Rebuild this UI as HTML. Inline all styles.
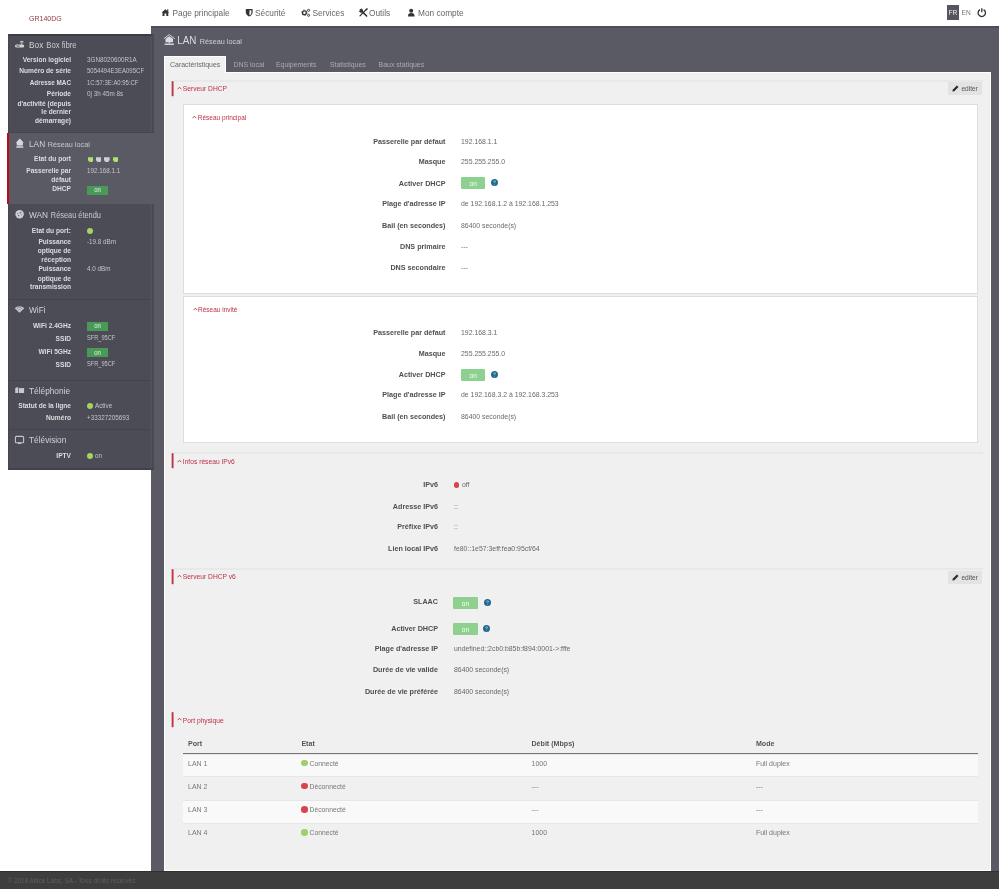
<!DOCTYPE html>
<html><head><meta charset="utf-8"><title>LAN</title>
<style>
html,body{margin:0;padding:0;}
body{width:999px;height:889px;overflow:hidden;position:relative;background:#fff;font-family:"Liberation Sans", sans-serif;}
.t{position:absolute;white-space:nowrap;transform:scaleY(1.11);}
.r{position:absolute;}
</style></head><body>
<div id="wrap" style="position:absolute;left:0;top:0;width:999px;height:889px;will-change:transform">
<div class="t" style="left:29px;top:12.60px;height:12px;line-height:12px;font-size:7px;color:#8e3a45;">GR140DG</div>
<svg class="r" style="left:0;top:0" width="999" height="26" viewBox="0 0 999 26">
<g fill="#333">
<path d="M161.6 12.6 L165.4 9.2 L169.2 12.6 L168.3 12.6 L168.3 15.9 L166.3 15.9 L166.3 13.6 L164.5 13.6 L164.5 15.9 L162.5 15.9 L162.5 12.6Z"/>
<rect x="167.2" y="9.3" width="1.1" height="2.2"/>
<path d="M245.8 9 H252.6 V12.3 C252.6 14.6 250.6 16 249.2 16.6 C247.8 16 245.8 14.6 245.8 12.3Z"/>
</g>
<path d="M249.6 10.2 H251.4 V12.4 C251.4 13.8 250.7 14.8 249.4 15.3Z" fill="#fff"/>
<g fill="none" stroke="#333">
<circle cx="304.4" cy="12.7" r="1.9" stroke-width="1.3"/>
<circle cx="308.6" cy="10.3" r="1.05" stroke-width="0.9"/>
<circle cx="308.6" cy="15.3" r="1.05" stroke-width="0.9"/>
</g>
<g fill="#333">
<circle cx="304.4" cy="12.7" r="2.75" fill="none" stroke="#333" stroke-width="0.9" stroke-dasharray="1.1 1.78"/>
</g>
<g stroke="#333" fill="none" stroke-linecap="round">
<path d="M360.5 9.8 L366.6 16" stroke-width="1.7"/>
<path d="M366.8 9 L360 15.9" stroke-width="1.2"/>
</g>
<path d="M359 10.6 A1.9 1.9 0 0 0 361.8 12.4 L362.6 11.6 A1.9 1.9 0 0 0 360.7 8.6 L361.3 9.9 L360.4 10.9Z" fill="#333"/>
<path d="M365.4 9.8 L367.3 8.2 L367.9 8.9 L366.3 10.6Z" fill="#333"/>
<g fill="#333">
<circle cx="411.2" cy="10.8" r="2"/>
<path d="M408 16.5 C408 13.6 409 12.9 411.2 12.9 C413.5 12.9 414.6 13.6 414.6 16.5Z"/>
</g>
<path d="M980 9.6 A3.7 3.7 0 1 0 983.6 9.6" fill="none" stroke="#333" stroke-width="1.3"/>
<path d="M981.8 8.2 V12.3" stroke="#333" stroke-width="1.3"/>
</svg>
<div class="t" style="left:172.5px;top:7.20px;height:12px;line-height:12px;font-size:8.3px;color:#666;">Page principale</div>
<div class="t" style="left:255px;top:7.20px;height:12px;line-height:12px;font-size:8.3px;color:#666;">Sécurité</div>
<div class="t" style="left:312.5px;top:7.20px;height:12px;line-height:12px;font-size:8.3px;color:#666;">Services</div>
<div class="t" style="left:369px;top:7.20px;height:12px;line-height:12px;font-size:8.3px;color:#666;">Outils</div>
<div class="t" style="left:418px;top:7.20px;height:12px;line-height:12px;font-size:8.3px;color:#666;">Mon compte</div>
<div class="r" style="left:947px;top:5px;width:12px;height:15px;background:#55555f;"></div>
<div class="t" style="left:947px;top:6.50px;height:12px;line-height:12px;font-size:6.6px;color:#f0f0f0;width:12px;text-align:center;">FR</div>
<div class="t" style="left:961.5px;top:6.50px;height:12px;line-height:12px;font-size:6.6px;color:#777;">EN</div>
<div class="r" style="left:151px;top:26px;width:848px;height:845px;background:#5a5a64;"></div>
<div class="r" style="left:151px;top:26px;width:848px;height:1.5px;background:#4e4e58;"></div>
<div class="r" style="left:0px;top:871px;width:999px;height:18px;background:#3e3e3e;"></div>
<div class="t" style="left:7.5px;top:875.10px;height:12px;line-height:12px;font-size:6.4px;color:#5f5f5f;">© 2018 Altice Labs, SA - Tous droits réservés</div>
<div class="r" style="left:8px;top:34px;width:142px;height:435px;background:#4c4c56;"></div>
<div class="r" style="left:150px;top:34px;width:2px;height:435px;background:#51515b;"></div>
<div class="r" style="left:152px;top:34px;width:2px;height:435px;background:#494953;"></div>
<div class="r" style="left:8px;top:468px;width:146px;height:1.5px;background:#42424b;"></div>
<div class="r" style="left:8px;top:34px;width:144px;height:1.5px;background:#3d3d46;"></div>
<div class="r" style="left:8px;top:34px;width:1px;height:435px;background:#464650;"></div>
<div class="r" style="left:8px;top:132px;width:146px;height:1.3px;background:#45454e;"></div>
<div class="r" style="left:9px;top:133.3px;width:155px;height:70.5px;background:#5a5a64;"></div>
<div class="r" style="left:7px;top:133.3px;width:2px;height:70.5px;background:#b80a18;"></div>
<div class="r" style="left:9px;top:299px;width:141px;height:1px;background:#44444d;"></div>
<div class="r" style="left:9px;top:380px;width:141px;height:1px;background:#44444d;"></div>
<div class="r" style="left:9px;top:429px;width:141px;height:1px;background:#44444d;"></div>
<svg class="r" style="left:0;top:0" width="160" height="470" viewBox="0 0 160 470">
<g fill="#d4d4d8">
<rect x="15" y="44.4" width="9.2" height="3.2" rx="1.5"/>
<rect x="21.3" y="42.2" width="1" height="2.5"/>
<path d="M19.7 42.3 A2.2 2.2 0 0 1 23.9 42.3 L23 42.5 A1.3 1.3 0 0 0 20.6 42.5Z"/>
</g>
<rect x="16.5" y="45.5" width="3" height="1" fill="#4c4c56"/>
<g fill="#d8d8dc">
<path d="M15.8 142.7 L19.8 138.4 L23.8 142.7 L22.9 142.7 L22.9 145.6 L16.7 145.6 L16.7 142.7Z"/>
<rect x="19.3" y="145.4" width="1" height="1"/>
<rect x="16.2" y="146.3" width="7.2" height="1.5" rx="0.6"/>
</g>
<circle cx="19.6" cy="214.3" r="4.2" fill="#cfcfd3"/>
<g fill="#6a6a72">
<circle cx="20.4" cy="212.6" r="0.9"/><circle cx="17.6" cy="213.5" r="0.6"/><circle cx="18.6" cy="215.6" r="0.8"/><circle cx="21.6" cy="214.8" r="0.5"/>
</g>
<path d="M19.55 312.8 L14.8 308.2 A6.8 6.8 0 0 1 24.3 308.2Z" fill="#cfcfd3"/>
<path d="M16.6 308.6 A4.3 4.3 0 0 1 22.5 308.6" stroke="#55555f" stroke-width="0.6" fill="none"/>
<path d="M18 310.3 A2.3 2.3 0 0 1 21.1 310.3" stroke="#55555f" stroke-width="0.5" fill="none"/>
<g fill="#c8c8cc">
<path d="M15.2 388.3 Q17 386.6 18.3 387.4 V393 H15.2Z"/>
<rect x="19" y="388.1" width="5.1" height="4.9"/>
</g>
<rect x="15.4" y="436.4" width="8.2" height="6.4" rx="1" fill="none" stroke="#c4c4c8" stroke-width="1.1"/>
<rect x="17.8" y="442.6" width="3.4" height="1.3" rx="0.5" fill="#c4c4c8"/>
</svg>
<div class="t" style="left:29px;top:38.60px;height:12px;line-height:12px;font-size:8.3px;color:#d2d2d6;">Box</div>
<div class="t" style="left:46.3px;top:39.60px;height:12px;line-height:12px;font-size:7.7px;color:#c9c9ce;">Box fibre</div>
<div class="t" style="left:-329px;width:400px;text-align:right;top:53.60px;height:12px;line-height:12px;font-size:6.6px;color:#dcdce0;font-weight:700;">Version logiciel</div>
<div class="t" style="left:87px;top:53.60px;height:12px;line-height:12px;font-size:6.3px;color:#c4c4c9;">3GN8020600R1A</div>
<div class="t" style="left:-329px;width:400px;text-align:right;top:65.30px;height:12px;line-height:12px;font-size:6.6px;color:#dcdce0;font-weight:700;">Numéro de série</div>
<div class="t" style="left:87px;top:65.30px;height:12px;line-height:12px;font-size:6.05px;color:#c4c4c9;">5054494E3EA095CF</div>
<div class="t" style="left:-329px;width:400px;text-align:right;top:76.50px;height:12px;line-height:12px;font-size:6.35px;color:#dcdce0;font-weight:700;">Adresse MAC</div>
<div class="t" style="left:87px;top:76.50px;height:12px;line-height:12px;font-size:5.95px;color:#c4c4c9;">1C:57:3E:A0:95:CF</div>
<div class="t" style="left:-329px;width:400px;text-align:right;top:88.30px;height:12px;line-height:12px;font-size:6.6px;color:#dcdce0;font-weight:700;">Période</div>
<div class="t" style="left:87px;top:88.30px;height:12px;line-height:12px;font-size:6.3px;color:#c4c4c9;">0j 3h 45m 8s</div>
<div class="t" style="left:-329px;width:400px;text-align:right;top:97.60px;height:12px;line-height:12px;font-size:6.6px;color:#dcdce0;font-weight:700;">d'activité (depuis</div>
<div class="t" style="left:-329px;width:400px;text-align:right;top:106.20px;height:12px;line-height:12px;font-size:6.6px;color:#dcdce0;font-weight:700;">le dernier</div>
<div class="t" style="left:-329px;width:400px;text-align:right;top:114.80px;height:12px;line-height:12px;font-size:6.6px;color:#dcdce0;font-weight:700;">démarrage)</div>
<div class="t" style="left:29px;top:138.20px;height:12px;line-height:12px;font-size:8.3px;color:#d2d2d6;">LAN</div>
<div class="t" style="left:47.8px;top:139.20px;height:12px;line-height:12px;font-size:7.27px;color:#c9c9ce;">Réseau local</div>
<div class="t" style="left:-329px;width:400px;text-align:right;top:153.30px;height:12px;line-height:12px;font-size:6.6px;color:#dcdce0;font-weight:700;">Etat du port</div>
<svg class="r" style="left:87.7px;top:156.6px" width="5.6" height="5.2" viewBox="0 0 5.6 5.2"><path d="M0 0.2 H5.6 V2.4 Q5.6 5 2.8 5.1 Q0 5 0 2.4Z" fill="#aee36a"/></svg>
<svg class="r" style="left:95.9px;top:156.6px" width="5.6" height="5.2" viewBox="0 0 5.6 5.2"><path d="M0 0.2 H5.6 V2.4 Q5.6 5 2.8 5.1 Q0 5 0 2.4Z" fill="#cfcfd3"/></svg>
<svg class="r" style="left:104.1px;top:156.6px" width="5.6" height="5.2" viewBox="0 0 5.6 5.2"><path d="M0 0.2 H5.6 V2.4 Q5.6 5 2.8 5.1 Q0 5 0 2.4Z" fill="#cfcfd3"/></svg>
<svg class="r" style="left:112.8px;top:156.6px" width="5.6" height="5.2" viewBox="0 0 5.6 5.2"><path d="M0 0.2 H5.6 V2.4 Q5.6 5 2.8 5.1 Q0 5 0 2.4Z" fill="#aee36a"/></svg>
<div class="t" style="left:-329px;width:400px;text-align:right;top:165.00px;height:12px;line-height:12px;font-size:6.6px;color:#dcdce0;font-weight:700;">Passerelle par</div>
<div class="t" style="left:-329px;width:400px;text-align:right;top:173.60px;height:12px;line-height:12px;font-size:6.6px;color:#dcdce0;font-weight:700;">défaut</div>
<div class="t" style="left:87px;top:165.00px;height:12px;line-height:12px;font-size:6.3px;color:#c4c4c9;">192.168.1.1</div>
<div class="t" style="left:-329px;width:400px;text-align:right;top:183.40px;height:12px;line-height:12px;font-size:6.6px;color:#dcdce0;font-weight:700;">DHCP</div>
<div class="r" style="left:87.3px;top:186px;width:20.6px;height:8.6px;background:#4a9a57;"></div>
<div class="t" style="left:87.3px;top:184.30px;height:12px;line-height:12px;font-size:6px;color:#e8f0e8;width:20.6px;text-align:center;">on</div>
<div class="t" style="left:29px;top:208.80px;height:12px;line-height:12px;font-size:8.3px;color:#d2d2d6;">WAN</div>
<div class="t" style="left:50.8px;top:209.80px;height:12px;line-height:12px;font-size:7.4px;color:#c9c9ce;">Réseau étendu</div>
<div class="t" style="left:-329px;width:400px;text-align:right;top:224.50px;height:12px;line-height:12px;font-size:6.6px;color:#dcdce0;font-weight:700;">Etat du port:</div>
<div class="r" style="left:87.3px;top:227.5px;width:6px;height:6px;border-radius:50%;background:#a3d55f"></div>
<div class="t" style="left:-329px;width:400px;text-align:right;top:235.70px;height:12px;line-height:12px;font-size:6.6px;color:#dcdce0;font-weight:700;">Puissance</div>
<div class="t" style="left:-329px;width:400px;text-align:right;top:245.00px;height:12px;line-height:12px;font-size:6.6px;color:#dcdce0;font-weight:700;">optique de</div>
<div class="t" style="left:-329px;width:400px;text-align:right;top:254.00px;height:12px;line-height:12px;font-size:6.6px;color:#dcdce0;font-weight:700;">réception</div>
<div class="t" style="left:87px;top:235.70px;height:12px;line-height:12px;font-size:6.3px;color:#c4c4c9;">-19.8 dBm</div>
<div class="t" style="left:-329px;width:400px;text-align:right;top:263.40px;height:12px;line-height:12px;font-size:6.6px;color:#dcdce0;font-weight:700;">Puissance</div>
<div class="t" style="left:-329px;width:400px;text-align:right;top:272.80px;height:12px;line-height:12px;font-size:6.6px;color:#dcdce0;font-weight:700;">optique de</div>
<div class="t" style="left:-329px;width:400px;text-align:right;top:281.40px;height:12px;line-height:12px;font-size:6.6px;color:#dcdce0;font-weight:700;">transmission</div>
<div class="t" style="left:87px;top:263.40px;height:12px;line-height:12px;font-size:6.3px;color:#c4c4c9;">4.0 dBm</div>
<div class="t" style="left:29px;top:304.30px;height:12px;line-height:12px;font-size:8.3px;color:#d2d2d6;">WiFi</div>
<div class="t" style="left:-329px;width:400px;text-align:right;top:319.70px;height:12px;line-height:12px;font-size:6.6px;color:#dcdce0;font-weight:700;">WiFi 2.4GHz</div>
<div class="r" style="left:87.3px;top:322px;width:20.6px;height:8.5px;background:#4a9a57;"></div>
<div class="t" style="left:87.3px;top:320.30px;height:12px;line-height:12px;font-size:6px;color:#e8f0e8;width:20.6px;text-align:center;">on</div>
<div class="t" style="left:-329px;width:400px;text-align:right;top:332.80px;height:12px;line-height:12px;font-size:6.6px;color:#dcdce0;font-weight:700;">SSID</div>
<div class="t" style="left:87px;top:331.80px;height:12px;line-height:12px;font-size:5.65px;color:#c4c4c9;">SFR_95CF</div>
<div class="t" style="left:-329px;width:400px;text-align:right;top:345.60px;height:12px;line-height:12px;font-size:6.6px;color:#dcdce0;font-weight:700;">WiFi 5GHz</div>
<div class="r" style="left:87.3px;top:348.3px;width:20.6px;height:9px;background:#4a9a57;"></div>
<div class="t" style="left:87.3px;top:346.80px;height:12px;line-height:12px;font-size:6px;color:#e8f0e8;width:20.6px;text-align:center;">on</div>
<div class="t" style="left:-329px;width:400px;text-align:right;top:358.80px;height:12px;line-height:12px;font-size:6.6px;color:#dcdce0;font-weight:700;">SSID</div>
<div class="t" style="left:87px;top:357.80px;height:12px;line-height:12px;font-size:5.65px;color:#c4c4c9;">SFR_95CF</div>
<div class="t" style="left:29px;top:385.00px;height:12px;line-height:12px;font-size:8.3px;color:#d2d2d6;">Téléphonie</div>
<div class="t" style="left:-329px;width:400px;text-align:right;top:400.00px;height:12px;line-height:12px;font-size:6.6px;color:#dcdce0;font-weight:700;">Statut de la ligne</div>
<div class="r" style="left:87.3px;top:403px;width:6px;height:6px;border-radius:50%;background:#a3d55f"></div>
<div class="t" style="left:95px;top:400.30px;height:12px;line-height:12px;font-size:6.3px;color:#c4c4c9;">Active</div>
<div class="t" style="left:-329px;width:400px;text-align:right;top:411.50px;height:12px;line-height:12px;font-size:6.6px;color:#dcdce0;font-weight:700;">Numéro</div>
<div class="t" style="left:87px;top:411.50px;height:12px;line-height:12px;font-size:6.3px;color:#c4c4c9;">+33327205693</div>
<div class="t" style="left:29px;top:434.30px;height:12px;line-height:12px;font-size:8.3px;color:#d2d2d6;">Télévision</div>
<div class="t" style="left:-329px;width:400px;text-align:right;top:449.80px;height:12px;line-height:12px;font-size:6.6px;color:#dcdce0;font-weight:700;">IPTV</div>
<div class="r" style="left:87.3px;top:452.8px;width:6px;height:6px;border-radius:50%;background:#a3d55f"></div>
<div class="t" style="left:95px;top:450.00px;height:12px;line-height:12px;font-size:6.3px;color:#c4c4c9;">on</div>
<svg class="r" style="left:160px;top:30px" width="20" height="20" viewBox="160 30 20 20"><path d="M163.9 38.6 L169.25 34.7 L174.6 38.6" fill="none" stroke="#d6d6da" stroke-width="1"/><path d="M165.5 38.8 L169.25 36.2 L173 38.8 V42.3 H165.5Z" fill="#dcdce0"/><rect x="168.7" y="42" width="1.1" height="1.6" fill="#dcdce0"/><rect x="164.6" y="43.5" width="9.3" height="1.5" fill="#d0d0d4"/></svg>
<div class="t" style="left:177.2px;top:34.90px;height:12px;line-height:12px;font-size:9.8px;color:#dcdce0;">LAN</div>
<div class="t" style="left:199.7px;top:35.80px;height:12px;line-height:12px;font-size:7.3px;color:#d0d0d5;">Réseau local</div>
<div class="r" style="left:164px;top:56px;width:62px;height:17px;background:#f0f0f0;border:1px solid #fff;border-bottom:none;box-sizing:border-box;"></div>
<div class="t" style="left:170px;top:59.20px;height:12px;line-height:12px;font-size:6.96px;color:#666;">Caractéristiques</div>
<div class="t" style="left:233.4px;top:59.20px;height:12px;line-height:12px;font-size:6.96px;color:#ababb3;">DNS local</div>
<div class="t" style="left:275.9px;top:59.20px;height:12px;line-height:12px;font-size:6.96px;color:#ababb3;">Equipements</div>
<div class="t" style="left:329.9px;top:59.20px;height:12px;line-height:12px;font-size:6.96px;color:#ababb3;">Statistiques</div>
<div class="t" style="left:378.6px;top:59.20px;height:12px;line-height:12px;font-size:6.96px;color:#ababb3;">Baux statiques</div>
<div class="r" style="left:164px;top:72px;width:827px;height:799px;background:#f0f0f0;border:1px solid #fff;box-sizing:border-box;"></div>
<div class="r" style="left:165px;top:72px;width:60px;height:1px;background:#f0f0f0;"></div>
<div class="r" style="left:0px;top:871px;width:999px;height:1.2px;background:#303030;"></div>
<div class="r" style="left:173.5px;top:80px;width:809.5px;height:2px;background:#e8e8e8;"></div>
<svg class="r" style="left:170px;top:80px" width="6" height="18" viewBox="0 0 6 18"><rect x="1.65" y="0.9" width="1.9" height="15.4" rx="0.9" fill="#bc3549"/></svg>
<svg class="r" style="left:176.5px;top:86.2px" width="5" height="4" viewBox="0 0 5 4"><path d="M0.6 3.2 L2.5 1.2 L4.4 3.2" stroke="#bf2f45" stroke-width="0.9" fill="none"/></svg>
<div class="t" style="left:182.8px;top:82.60px;height:12px;line-height:12px;font-size:6.7px;color:#bf2f45;">Serveur DHCP</div>
<div class="r" style="left:948.3px;top:82.3px;width:33.5px;height:12.8px;background:#e3e3e3;border-radius:1px;"></div>
<svg class="r" style="left:952px;top:85.3px" width="7" height="7" viewBox="0 0 7 7"><path d="M0.4 6.6 L0.7 4.7 L4.9 0.5 L6.5 2.1 L2.3 6.3Z" fill="#2a2a2a"/></svg>
<div class="t" style="left:961.4px;top:83.40px;height:12px;line-height:12px;font-size:6.6px;color:#555;">editer</div>
<div class="r" style="left:183px;top:104px;width:795px;height:190px;background:#fff;border:1px solid #dedede;box-sizing:border-box;"></div>
<svg class="r" style="left:192px;top:115px" width="5" height="4" viewBox="0 0 5 4"><path d="M0.6 3.2 L2.5 1.2 L4.4 3.2" stroke="#bf2f45" stroke-width="0.9" fill="none"/></svg>
<div class="t" style="left:197.8px;top:111.50px;height:12px;line-height:12px;font-size:6.5px;color:#bf2f45;">Réseau principal</div>
<div class="t" style="left:45.5px;width:400px;text-align:right;top:135.50px;height:12px;line-height:12px;font-size:7.2px;color:#4f4f4f;font-weight:700;">Passerelle par défaut</div>
<div class="t" style="left:461px;top:135.50px;height:12px;line-height:12px;font-size:6.9px;color:#686868;">192.168.1.1</div>
<div class="t" style="left:45.5px;width:400px;text-align:right;top:156.20px;height:12px;line-height:12px;font-size:7.2px;color:#4f4f4f;font-weight:700;">Masque</div>
<div class="t" style="left:461px;top:156.20px;height:12px;line-height:12px;font-size:6.9px;color:#686868;">255.255.255.0</div>
<div class="t" style="left:45.5px;width:400px;text-align:right;top:177.90px;height:12px;line-height:12px;font-size:7.2px;color:#4f4f4f;font-weight:700;">Activer DHCP</div>
<div class="r" style="left:461px;top:177px;width:24.3px;height:12.3px;background:#8ed08f;border-radius:1px;"></div>
<div class="t" style="left:461px;top:178.05px;height:12px;line-height:12px;font-size:6.6px;color:#f4fff4;width:24.3px;text-align:center;">on</div>
<svg class="r" style="left:490.50px;top:179.00px" width="7" height="7" viewBox="0 0 8 8"><circle cx="4" cy="4" r="4" fill="#1f6a90"/><path d="M2.9 3.1 Q2.9 2.1 4 2.1 Q5.1 2.1 5.1 3 Q5.1 3.6 4.2 4.1 V4.7" stroke="#c8dce6" stroke-width="0.8" fill="none"/><circle cx="4.15" cy="5.9" r="0.45" fill="#c8dce6"/></svg>
<div class="t" style="left:45.5px;width:400px;text-align:right;top:197.90px;height:12px;line-height:12px;font-size:7.2px;color:#4f4f4f;font-weight:700;">Plage d'adresse IP</div>
<div class="t" style="left:461px;top:197.90px;height:12px;line-height:12px;font-size:6.9px;color:#686868;">de 192.168.1.2 à 192.168.1.253</div>
<div class="t" style="left:45.5px;width:400px;text-align:right;top:219.50px;height:12px;line-height:12px;font-size:7.2px;color:#4f4f4f;font-weight:700;">Bail (en secondes)</div>
<div class="t" style="left:461px;top:219.50px;height:12px;line-height:12px;font-size:6.9px;color:#686868;">86400 seconde(s)</div>
<div class="t" style="left:45.5px;width:400px;text-align:right;top:240.75px;height:12px;line-height:12px;font-size:7.2px;color:#4f4f4f;font-weight:700;">DNS primaire</div>
<div class="t" style="left:461px;top:240.75px;height:12px;line-height:12px;font-size:6.9px;color:#686868;">---</div>
<div class="t" style="left:45.5px;width:400px;text-align:right;top:261.50px;height:12px;line-height:12px;font-size:7.2px;color:#4f4f4f;font-weight:700;">DNS secondaire</div>
<div class="t" style="left:461px;top:261.50px;height:12px;line-height:12px;font-size:6.9px;color:#686868;">---</div>
<div class="r" style="left:183px;top:296px;width:795px;height:147px;background:#fff;border:1px solid #dedede;box-sizing:border-box;"></div>
<svg class="r" style="left:192.5px;top:306.5px" width="5" height="4" viewBox="0 0 5 4"><path d="M0.6 3.2 L2.5 1.2 L4.4 3.2" stroke="#bf2f45" stroke-width="0.9" fill="none"/></svg>
<div class="t" style="left:198px;top:303.70px;height:12px;line-height:12px;font-size:6.5px;color:#bf2f45;">Réseau invité</div>
<div class="t" style="left:45.5px;width:400px;text-align:right;top:327.20px;height:12px;line-height:12px;font-size:7.2px;color:#4f4f4f;font-weight:700;">Passerelle par défaut</div>
<div class="t" style="left:461px;top:327.20px;height:12px;line-height:12px;font-size:6.9px;color:#686868;">192.168.3.1</div>
<div class="t" style="left:45.5px;width:400px;text-align:right;top:347.90px;height:12px;line-height:12px;font-size:7.2px;color:#4f4f4f;font-weight:700;">Masque</div>
<div class="t" style="left:461px;top:347.90px;height:12px;line-height:12px;font-size:6.9px;color:#686868;">255.255.255.0</div>
<div class="t" style="left:45.5px;width:400px;text-align:right;top:369.20px;height:12px;line-height:12px;font-size:7.2px;color:#4f4f4f;font-weight:700;">Activer DHCP</div>
<div class="r" style="left:461px;top:369px;width:24.3px;height:12.3px;background:#8ed08f;border-radius:1px;"></div>
<div class="t" style="left:461px;top:370.05px;height:12px;line-height:12px;font-size:6.6px;color:#f4fff4;width:24.3px;text-align:center;">on</div>
<svg class="r" style="left:490.60px;top:370.90px" width="7" height="7" viewBox="0 0 8 8"><circle cx="4" cy="4" r="4" fill="#1f6a90"/><path d="M2.9 3.1 Q2.9 2.1 4 2.1 Q5.1 2.1 5.1 3 Q5.1 3.6 4.2 4.1 V4.7" stroke="#c8dce6" stroke-width="0.8" fill="none"/><circle cx="4.15" cy="5.9" r="0.45" fill="#c8dce6"/></svg>
<div class="t" style="left:45.5px;width:400px;text-align:right;top:389.20px;height:12px;line-height:12px;font-size:7.2px;color:#4f4f4f;font-weight:700;">Plage d'adresse IP</div>
<div class="t" style="left:461px;top:389.20px;height:12px;line-height:12px;font-size:6.9px;color:#686868;">de 192.168.3.2 à 192.168.3.253</div>
<div class="t" style="left:45.5px;width:400px;text-align:right;top:411.20px;height:12px;line-height:12px;font-size:7.2px;color:#4f4f4f;font-weight:700;">Bail (en secondes)</div>
<div class="t" style="left:461px;top:411.20px;height:12px;line-height:12px;font-size:6.9px;color:#686868;">86400 seconde(s)</div>
<div class="r" style="left:173.5px;top:452px;width:809.5px;height:2px;background:#e8e8e8;"></div>
<svg class="r" style="left:170px;top:452.3px" width="6" height="18" viewBox="0 0 6 18"><rect x="1.65" y="0.9" width="1.9" height="15.4" rx="0.9" fill="#bc3549"/></svg>
<svg class="r" style="left:176.5px;top:458.5px" width="5" height="4" viewBox="0 0 5 4"><path d="M0.6 3.2 L2.5 1.2 L4.4 3.2" stroke="#bf2f45" stroke-width="0.9" fill="none"/></svg>
<div class="t" style="left:182.8px;top:455.70px;height:12px;line-height:12px;font-size:6.7px;color:#bf2f45;">Infos réseau IPv6</div>
<div class="t" style="left:38px;width:400px;text-align:right;top:478.60px;height:12px;line-height:12px;font-size:7.2px;color:#4f4f4f;font-weight:700;">IPv6</div>
<div class="r" style="left:453.6px;top:481.8px;width:5.8px;height:5.8px;border-radius:50%;background:#d9434e"></div>
<div class="t" style="left:462px;top:478.60px;height:12px;line-height:12px;font-size:6.9px;color:#686868;">off</div>
<div class="t" style="left:38px;width:400px;text-align:right;top:500.60px;height:12px;line-height:12px;font-size:7.2px;color:#4f4f4f;font-weight:700;">Adresse IPv6</div>
<div class="t" style="left:454px;top:500.60px;height:12px;line-height:12px;font-size:6.9px;color:#686868;">::</div>
<div class="t" style="left:38px;width:400px;text-align:right;top:521.40px;height:12px;line-height:12px;font-size:7.2px;color:#4f4f4f;font-weight:700;">Préfixe IPv6</div>
<div class="t" style="left:454px;top:521.40px;height:12px;line-height:12px;font-size:6.9px;color:#686868;">::</div>
<div class="t" style="left:38px;width:400px;text-align:right;top:543.00px;height:12px;line-height:12px;font-size:7.2px;color:#4f4f4f;font-weight:700;">Lien local IPv6</div>
<div class="t" style="left:454px;top:543.00px;height:12px;line-height:12px;font-size:6.9px;color:#686868;">fe80::1e57:3eff:fea0:95cf/64</div>
<div class="r" style="left:173.5px;top:568px;width:809.5px;height:2px;background:#e8e8e8;"></div>
<svg class="r" style="left:170px;top:568px" width="6" height="18" viewBox="0 0 6 18"><rect x="1.65" y="0.9" width="1.9" height="15.4" rx="0.9" fill="#bc3549"/></svg>
<svg class="r" style="left:176.5px;top:574.2px" width="5" height="4" viewBox="0 0 5 4"><path d="M0.6 3.2 L2.5 1.2 L4.4 3.2" stroke="#bf2f45" stroke-width="0.9" fill="none"/></svg>
<div class="t" style="left:182.8px;top:570.60px;height:12px;line-height:12px;font-size:6.7px;color:#bf2f45;">Serveur DHCP v6</div>
<div class="r" style="left:948.3px;top:570.9px;width:33.5px;height:12.8px;background:#e3e3e3;border-radius:1px;"></div>
<svg class="r" style="left:952px;top:573.9px" width="7" height="7" viewBox="0 0 7 7"><path d="M0.4 6.6 L0.7 4.7 L4.9 0.5 L6.5 2.1 L2.3 6.3Z" fill="#2a2a2a"/></svg>
<div class="t" style="left:961.4px;top:572.00px;height:12px;line-height:12px;font-size:6.6px;color:#555;">editer</div>
<div class="t" style="left:38px;width:400px;text-align:right;top:595.50px;height:12px;line-height:12px;font-size:7.2px;color:#4f4f4f;font-weight:700;">SLAAC</div>
<div class="r" style="left:453.3px;top:596.7px;width:24.3px;height:12.3px;background:#8ed08f;border-radius:1px;"></div>
<div class="t" style="left:453.3px;top:597.75px;height:12px;line-height:12px;font-size:6.6px;color:#f4fff4;width:24.3px;text-align:center;">on</div>
<svg class="r" style="left:484.20px;top:599.20px" width="7" height="7" viewBox="0 0 8 8"><circle cx="4" cy="4" r="4" fill="#1f6a90"/><path d="M2.9 3.1 Q2.9 2.1 4 2.1 Q5.1 2.1 5.1 3 Q5.1 3.6 4.2 4.1 V4.7" stroke="#c8dce6" stroke-width="0.8" fill="none"/><circle cx="4.15" cy="5.9" r="0.45" fill="#c8dce6"/></svg>
<div class="t" style="left:38px;width:400px;text-align:right;top:623.20px;height:12px;line-height:12px;font-size:7.2px;color:#4f4f4f;font-weight:700;">Activer DHCP</div>
<div class="r" style="left:453.3px;top:623.2px;width:24.3px;height:12.3px;background:#8ed08f;border-radius:1px;"></div>
<div class="t" style="left:453.3px;top:624.25px;height:12px;line-height:12px;font-size:6.6px;color:#f4fff4;width:24.3px;text-align:center;">on</div>
<svg class="r" style="left:482.80px;top:625.00px" width="7" height="7" viewBox="0 0 8 8"><circle cx="4" cy="4" r="4" fill="#1f6a90"/><path d="M2.9 3.1 Q2.9 2.1 4 2.1 Q5.1 2.1 5.1 3 Q5.1 3.6 4.2 4.1 V4.7" stroke="#c8dce6" stroke-width="0.8" fill="none"/><circle cx="4.15" cy="5.9" r="0.45" fill="#c8dce6"/></svg>
<div class="t" style="left:38px;width:400px;text-align:right;top:642.90px;height:12px;line-height:12px;font-size:7.2px;color:#4f4f4f;font-weight:700;">Plage d'adresse IP</div>
<div class="t" style="left:454px;top:642.90px;height:12px;line-height:12px;font-size:6.9px;color:#686868;">undefined::2cb0:b85b:f894:0001->:fffe</div>
<div class="t" style="left:38px;width:400px;text-align:right;top:664.00px;height:12px;line-height:12px;font-size:7.2px;color:#4f4f4f;font-weight:700;">Durée de vie valide</div>
<div class="t" style="left:454px;top:664.00px;height:12px;line-height:12px;font-size:6.9px;color:#686868;">86400 seconde(s)</div>
<div class="t" style="left:38px;width:400px;text-align:right;top:685.70px;height:12px;line-height:12px;font-size:7.2px;color:#4f4f4f;font-weight:700;">Durée de vie préférée</div>
<div class="t" style="left:454px;top:685.70px;height:12px;line-height:12px;font-size:6.9px;color:#686868;">86400 seconde(s)</div>
<svg class="r" style="left:170px;top:710.8px" width="6" height="18" viewBox="0 0 6 18"><rect x="1.65" y="0.9" width="1.9" height="15.4" rx="0.9" fill="#bc3549"/></svg>
<svg class="r" style="left:176.5px;top:717.0px" width="5" height="4" viewBox="0 0 5 4"><path d="M0.6 3.2 L2.5 1.2 L4.4 3.2" stroke="#bf2f45" stroke-width="0.9" fill="none"/></svg>
<div class="t" style="left:182.8px;top:714.60px;height:12px;line-height:12px;font-size:6.7px;color:#bf2f45;">Port physique</div>
<div class="t" style="left:188px;top:738.10px;height:12px;line-height:12px;font-size:7.1px;color:#555;font-weight:700;">Port</div>
<div class="t" style="left:301.4px;top:738.10px;height:12px;line-height:12px;font-size:7.1px;color:#555;font-weight:700;">Etat</div>
<div class="t" style="left:531.5px;top:738.10px;height:12px;line-height:12px;font-size:7.1px;color:#555;font-weight:700;">Débit (Mbps)</div>
<div class="t" style="left:755.9px;top:738.10px;height:12px;line-height:12px;font-size:7.1px;color:#555;font-weight:700;">Mode</div>
<div class="r" style="left:183px;top:752.5px;width:795px;height:1.6px;background:#777;"></div>
<div class="r" style="left:183px;top:754px;width:795px;height:22px;background:#f9f9f9;"></div>
<div class="r" style="left:183px;top:754px;width:795px;height:1px;background:#e6e6e6;"></div>
<div class="t" style="left:188px;top:758.10px;height:12px;line-height:12px;font-size:7px;color:#777;">LAN 1</div>
<div class="r" style="left:301.2px;top:759.80px;width:6.6px;height:6.6px;border-radius:50%;background:#9fd067"></div>
<div class="t" style="left:309.5px;top:758.10px;height:12px;line-height:12px;font-size:6.8px;color:#777;">Connecté</div>
<div class="t" style="left:531.5px;top:758.10px;height:12px;line-height:12px;font-size:7px;color:#777;">1000</div>
<div class="t" style="left:755.9px;top:758.10px;height:12px;line-height:12px;font-size:7px;color:#777;">Full duplex</div>
<div class="r" style="left:183px;top:776px;width:795px;height:24px;background:#f0f0f0;"></div>
<div class="r" style="left:183px;top:776px;width:795px;height:1px;background:#e6e6e6;"></div>
<div class="t" style="left:188px;top:780.50px;height:12px;line-height:12px;font-size:7px;color:#777;">LAN 2</div>
<div class="r" style="left:301.2px;top:782.60px;width:6.6px;height:6.6px;border-radius:50%;background:#d9434e"></div>
<div class="t" style="left:309.5px;top:780.50px;height:12px;line-height:12px;font-size:6.8px;color:#777;">Déconnecté</div>
<div class="t" style="left:531.5px;top:780.50px;height:12px;line-height:12px;font-size:7px;color:#777;">---</div>
<div class="t" style="left:755.9px;top:780.50px;height:12px;line-height:12px;font-size:7px;color:#777;">---</div>
<div class="r" style="left:183px;top:800px;width:795px;height:23px;background:#f9f9f9;"></div>
<div class="r" style="left:183px;top:800px;width:795px;height:1px;background:#e6e6e6;"></div>
<div class="t" style="left:188px;top:804.00px;height:12px;line-height:12px;font-size:7px;color:#777;">LAN 3</div>
<div class="r" style="left:301.2px;top:806.10px;width:6.6px;height:6.6px;border-radius:50%;background:#d9434e"></div>
<div class="t" style="left:309.5px;top:804.00px;height:12px;line-height:12px;font-size:6.8px;color:#777;">Déconnecté</div>
<div class="t" style="left:531.5px;top:804.00px;height:12px;line-height:12px;font-size:7px;color:#777;">---</div>
<div class="t" style="left:755.9px;top:804.00px;height:12px;line-height:12px;font-size:7px;color:#777;">---</div>
<div class="r" style="left:183px;top:823px;width:795px;height:23px;background:#f0f0f0;"></div>
<div class="r" style="left:183px;top:823px;width:795px;height:1px;background:#e6e6e6;"></div>
<div class="t" style="left:188px;top:827.00px;height:12px;line-height:12px;font-size:7px;color:#777;">LAN 4</div>
<div class="r" style="left:301.2px;top:829.10px;width:6.6px;height:6.6px;border-radius:50%;background:#9fd067"></div>
<div class="t" style="left:309.5px;top:827.00px;height:12px;line-height:12px;font-size:6.8px;color:#777;">Connecté</div>
<div class="t" style="left:531.5px;top:827.00px;height:12px;line-height:12px;font-size:7px;color:#777;">1000</div>
<div class="t" style="left:755.9px;top:827.00px;height:12px;line-height:12px;font-size:7px;color:#777;">Full duplex</div>
</div>
</body></html>
